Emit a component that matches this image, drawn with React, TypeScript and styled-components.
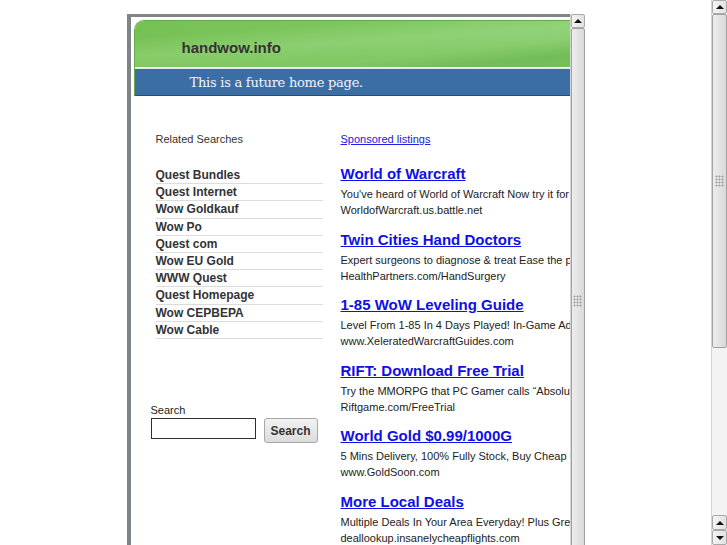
import React from "react";
import styled, { createGlobalStyle } from "styled-components";

const GlobalStyle = createGlobalStyle`
  html, body {
    margin: 0;
    padding: 0;
    height: 100%;
    overflow: hidden;
    background: #fff;
  }
  body {
    font-family: "Liberation Sans", Arial, sans-serif;
  }
`;

const related = [
  "Quest Bundles",
  "Quest Internet",
  "Wow Goldkauf",
  "Wow Po",
  "Quest com",
  "Wow EU Gold",
  "WWW Quest",
  "Quest Homepage",
  "Wow CEPBEPA",
  "Wow Cable",
];

const ads = [
  {
    title: "World of Warcraft",
    text: "You've heard of World of Warcraft Now try it for free",
    url: "WorldofWarcraft.us.battle.net",
  },
  {
    title: "Twin Cities Hand Doctors",
    text: "Expert surgeons to diagnose & treat Ease the pain",
    url: "HealthPartners.com/HandSurgery",
  },
  {
    title: "1-85 WoW Leveling Guide",
    text: "Level From 1-85 In 4 Days Played! In-Game Addon",
    url: "www.XeleratedWarcraftGuides.com",
  },
  {
    title: "RIFT: Download Free Trial",
    text: "Try the MMORPG that PC Gamer calls \u201cAbsolutely",
    url: "Riftgame.com/FreeTrial",
  },
  {
    title: "World Gold $0.99/1000G",
    text: "5 Mins Delivery, 100% Fully Stock, Buy Cheap Gold",
    url: "www.GoldSoon.com",
  },
  {
    title: "More Local Deals",
    text: "Multiple Deals In Your Area Everyday! Plus Great",
    url: "deallookup.insanelycheapflights.com",
  },
];

const Screen = styled.div`
  display: flex;
  width: 727px;
  height: 545px;
  overflow: hidden;
`;

const Viewport = styled.div`
  flex: 1;
  display: flex;
  justify-content: center;
  padding-top: 14px;
  overflow: hidden;
`;

const Frame = styled.div`
  width: 458px;
  display: flex;
  height: 560px;
`;

const Pane = styled.div`
  flex: 1;
  min-width: 0;
  border-top: 3px solid #7f8487;
  border-left: 4px solid #7f8487;
  overflow: hidden;
  background: #fff;
`;

const Page = styled.div`
  width: 620px;
  padding: 3px 0 0 0;
`;

const Header = styled.header`
  margin-left: 3px;
  border-radius: 10px 0 0 0;
  overflow: hidden;
  border: 1px solid #6aa84d;
  border-right: none;
  border-bottom: none;
`;

const GreenBand = styled.div`
  height: 47px;
  box-sizing: border-box;
  padding: 17px 0 0 47px;
  background:
    linear-gradient(174deg, transparent 0 58%, rgba(96, 176, 70, 0.55) 72%, rgba(96, 176, 70, 0.3) 100%),
    linear-gradient(176deg, rgba(255, 255, 255, 0) 0 18%, rgba(170, 225, 150, 0.35) 40%, rgba(170, 225, 150, 0.1) 60%),
    linear-gradient(90deg, #76c154, #80c863 50%, #8ccf72);
  border-bottom: 1px solid #ffffff;
`;

const SiteName = styled.h1`
  margin: 0;
  font-size: 15px;
  line-height: 20px;
  font-weight: bold;
  color: #333;
`;

const BlueBand = styled.div`
  height: 26px;
  padding-left: 55px;
  display: flex;
  align-items: center;
  background: #3c6ea6;
  border-top: 1px solid #dfe8f0;
  border-bottom: 1px solid #284b74;
`;

const Tagline = styled.div`
  font-family: "DejaVu Serif", "Liberation Serif", serif;
  font-size: 13px;
  letter-spacing: -0.25px;
  color: #f2f4f8;
`;

const Body = styled.div`
  display: flex;
  padding: 37px 0 0 20px;
`;

const LeftColumn = styled.div`
  width: 190px;
  flex: none;
  font-size: 11px;
  color: #333;
`;

const RightColumn = styled.div`
  flex: 1;
  white-space: nowrap;
`;

const SmallHeading = styled.div`
  font-size: 11px;
  line-height: 13px;
  color: #333;
  padding-left: 5px;
`;

const RelatedList = styled.ul`
  list-style: none;
  margin: 21px 0 0 5px;
  padding: 0;
  width: 167px;
`;

const RelatedItem = styled.li`
  font-size: 12px;
  font-weight: bold;
  line-height: 16.2px;
  color: #333;
  border-bottom: 1px solid #dcdcdc;
`;

const SearchForm = styled.form`
  margin-top: 65px;
`;

const SearchLabel = styled.label`
  display: block;
  font-size: 11px;
  line-height: 13px;
  color: #222;
  margin-bottom: 1px;
`;

const SearchRow = styled.div`
  display: flex;
  align-items: flex-start;
  gap: 8px;
`;

const SearchInput = styled.input`
  width: 105px;
  height: 21px;
  box-sizing: border-box;
  border: 1px solid #2e2e2e;
  margin: 0;
  padding: 0 3px;
`;

const SearchButton = styled.button`
  width: 54px;
  height: 25px;
  margin: 0;
  padding: 0;
  font-family: "Liberation Sans", Arial, sans-serif;
  font-size: 12px;
  font-weight: bold;
  color: #333;
  border: 1px solid #a8a8a8;
  border-radius: 3px;
  background: linear-gradient(#f2f2f2, #dcdcdc);
`;

const Sponsored = styled.a`
  display: block;
  font-size: 11px;
  line-height: 13px;
  color: #2020e0;
  text-decoration: underline;
  margin-bottom: 18px;
`;

const Ad = styled.div`
  margin-bottom: 11.5px;
`;

const AdTitle = styled.a`
  display: block;
  font-size: 15px;
  font-weight: bold;
  line-height: 20px;
  color: #0f0fe6;
  text-decoration: underline;
`;

const AdText = styled.div<{ $first?: boolean }>`
  margin-top: ${(p) => (p.$first ? "2px" : "0")};
  font-size: 11px;
  line-height: 16px;
  color: #222;
`;

const ScrollTrack = styled.div<{ $w: number }>`
  width: ${(p) => p.$w}px;
  flex: none;
  display: flex;
  flex-direction: column;
  background: #f3f3f3;
  border-left: 1px solid #d4d4d4;
  box-sizing: border-box;
`;

const ScrollButton = styled.div<{ $h: number }>`
  height: ${(p) => p.$h}px;
  flex: none;
  box-sizing: border-box;
  border: 1px solid #a9a9a9;
  border-radius: 2px;
  background: linear-gradient(90deg, #f4f4f4, #e2e2e2);
  display: flex;
  align-items: center;
  justify-content: center;
`;

const Arrow = styled.span<{ $down?: boolean }>`
  width: 0;
  height: 0;
  border-left: 4px solid transparent;
  border-right: 4px solid transparent;
  ${(p) =>
    p.$down ? "border-top: 4px solid #111;" : "border-bottom: 4px solid #111;"}
`;

const Thumb = styled.div<{ $h?: number }>`
  ${(p) => (p.$h ? `height: ${p.$h}px; flex: none;` : "flex: 1;")}
  box-sizing: border-box;
  border: 1px solid #a2a2a2;
  border-radius: 2px;
  background: linear-gradient(90deg, #ededed, #d9d9d9);
  display: flex;
  align-items: center;
  justify-content: center;
`;

const Grip = styled.span`
  width: 9px;
  height: 12px;
  background: radial-gradient(circle, #9c9c9c 0.9px, transparent 1.1px) 0 0 / 3px 3px;
`;

const Spacer = styled.div`
  flex: 1;
`;

const OuterScrollbar = () => (
  <ScrollTrack $w={16}>
    <ScrollButton $h={14}>
      <Arrow />
    </ScrollButton>
    <Thumb $h={334}>
      <Grip />
    </Thumb>
    <Spacer />
    <ScrollButton $h={15}>
      <Arrow />
    </ScrollButton>
    <ScrollButton $h={15}>
      <Arrow $down />
    </ScrollButton>
  </ScrollTrack>
);

const FrameScrollbar = () => (
  <ScrollTrack $w={15}>
    <ScrollButton $h={14}>
      <Arrow />
    </ScrollButton>
    <Thumb>
      <Grip />
    </Thumb>
  </ScrollTrack>
);

export default function App() {
  return (
    <>
      <GlobalStyle />
      <Screen>
        <Viewport>
          <Frame>
            <Pane>
              <Page>
                <Header>
                  <GreenBand>
                    <SiteName>handwow.info</SiteName>
                  </GreenBand>
                  <BlueBand>
                    <Tagline>This is a future home page.</Tagline>
                  </BlueBand>
                </Header>
                <Body>
                  <LeftColumn>
                    <SmallHeading>Related Searches</SmallHeading>
                    <RelatedList>
                      {related.map((r) => (
                        <RelatedItem key={r}>{r}</RelatedItem>
                      ))}
                    </RelatedList>
                    <SearchForm onSubmit={(e) => e.preventDefault()}>
                      <SearchLabel>Search</SearchLabel>
                      <SearchRow>
                        <SearchInput type="text" />
                        <SearchButton type="submit">Search</SearchButton>
                      </SearchRow>
                    </SearchForm>
                  </LeftColumn>
                  <RightColumn>
                    <Sponsored href="#">Sponsored listings</Sponsored>
                    {ads.map((a) => (
                      <Ad key={a.title}>
                        <AdTitle href="#">{a.title}</AdTitle>
                        <AdText $first>{a.text}</AdText>
                        <AdText>{a.url}</AdText>
                      </Ad>
                    ))}
                  </RightColumn>
                </Body>
              </Page>
            </Pane>
            <FrameScrollbar />
          </Frame>
        </Viewport>
        <OuterScrollbar />
      </Screen>
    </>
  );
}
